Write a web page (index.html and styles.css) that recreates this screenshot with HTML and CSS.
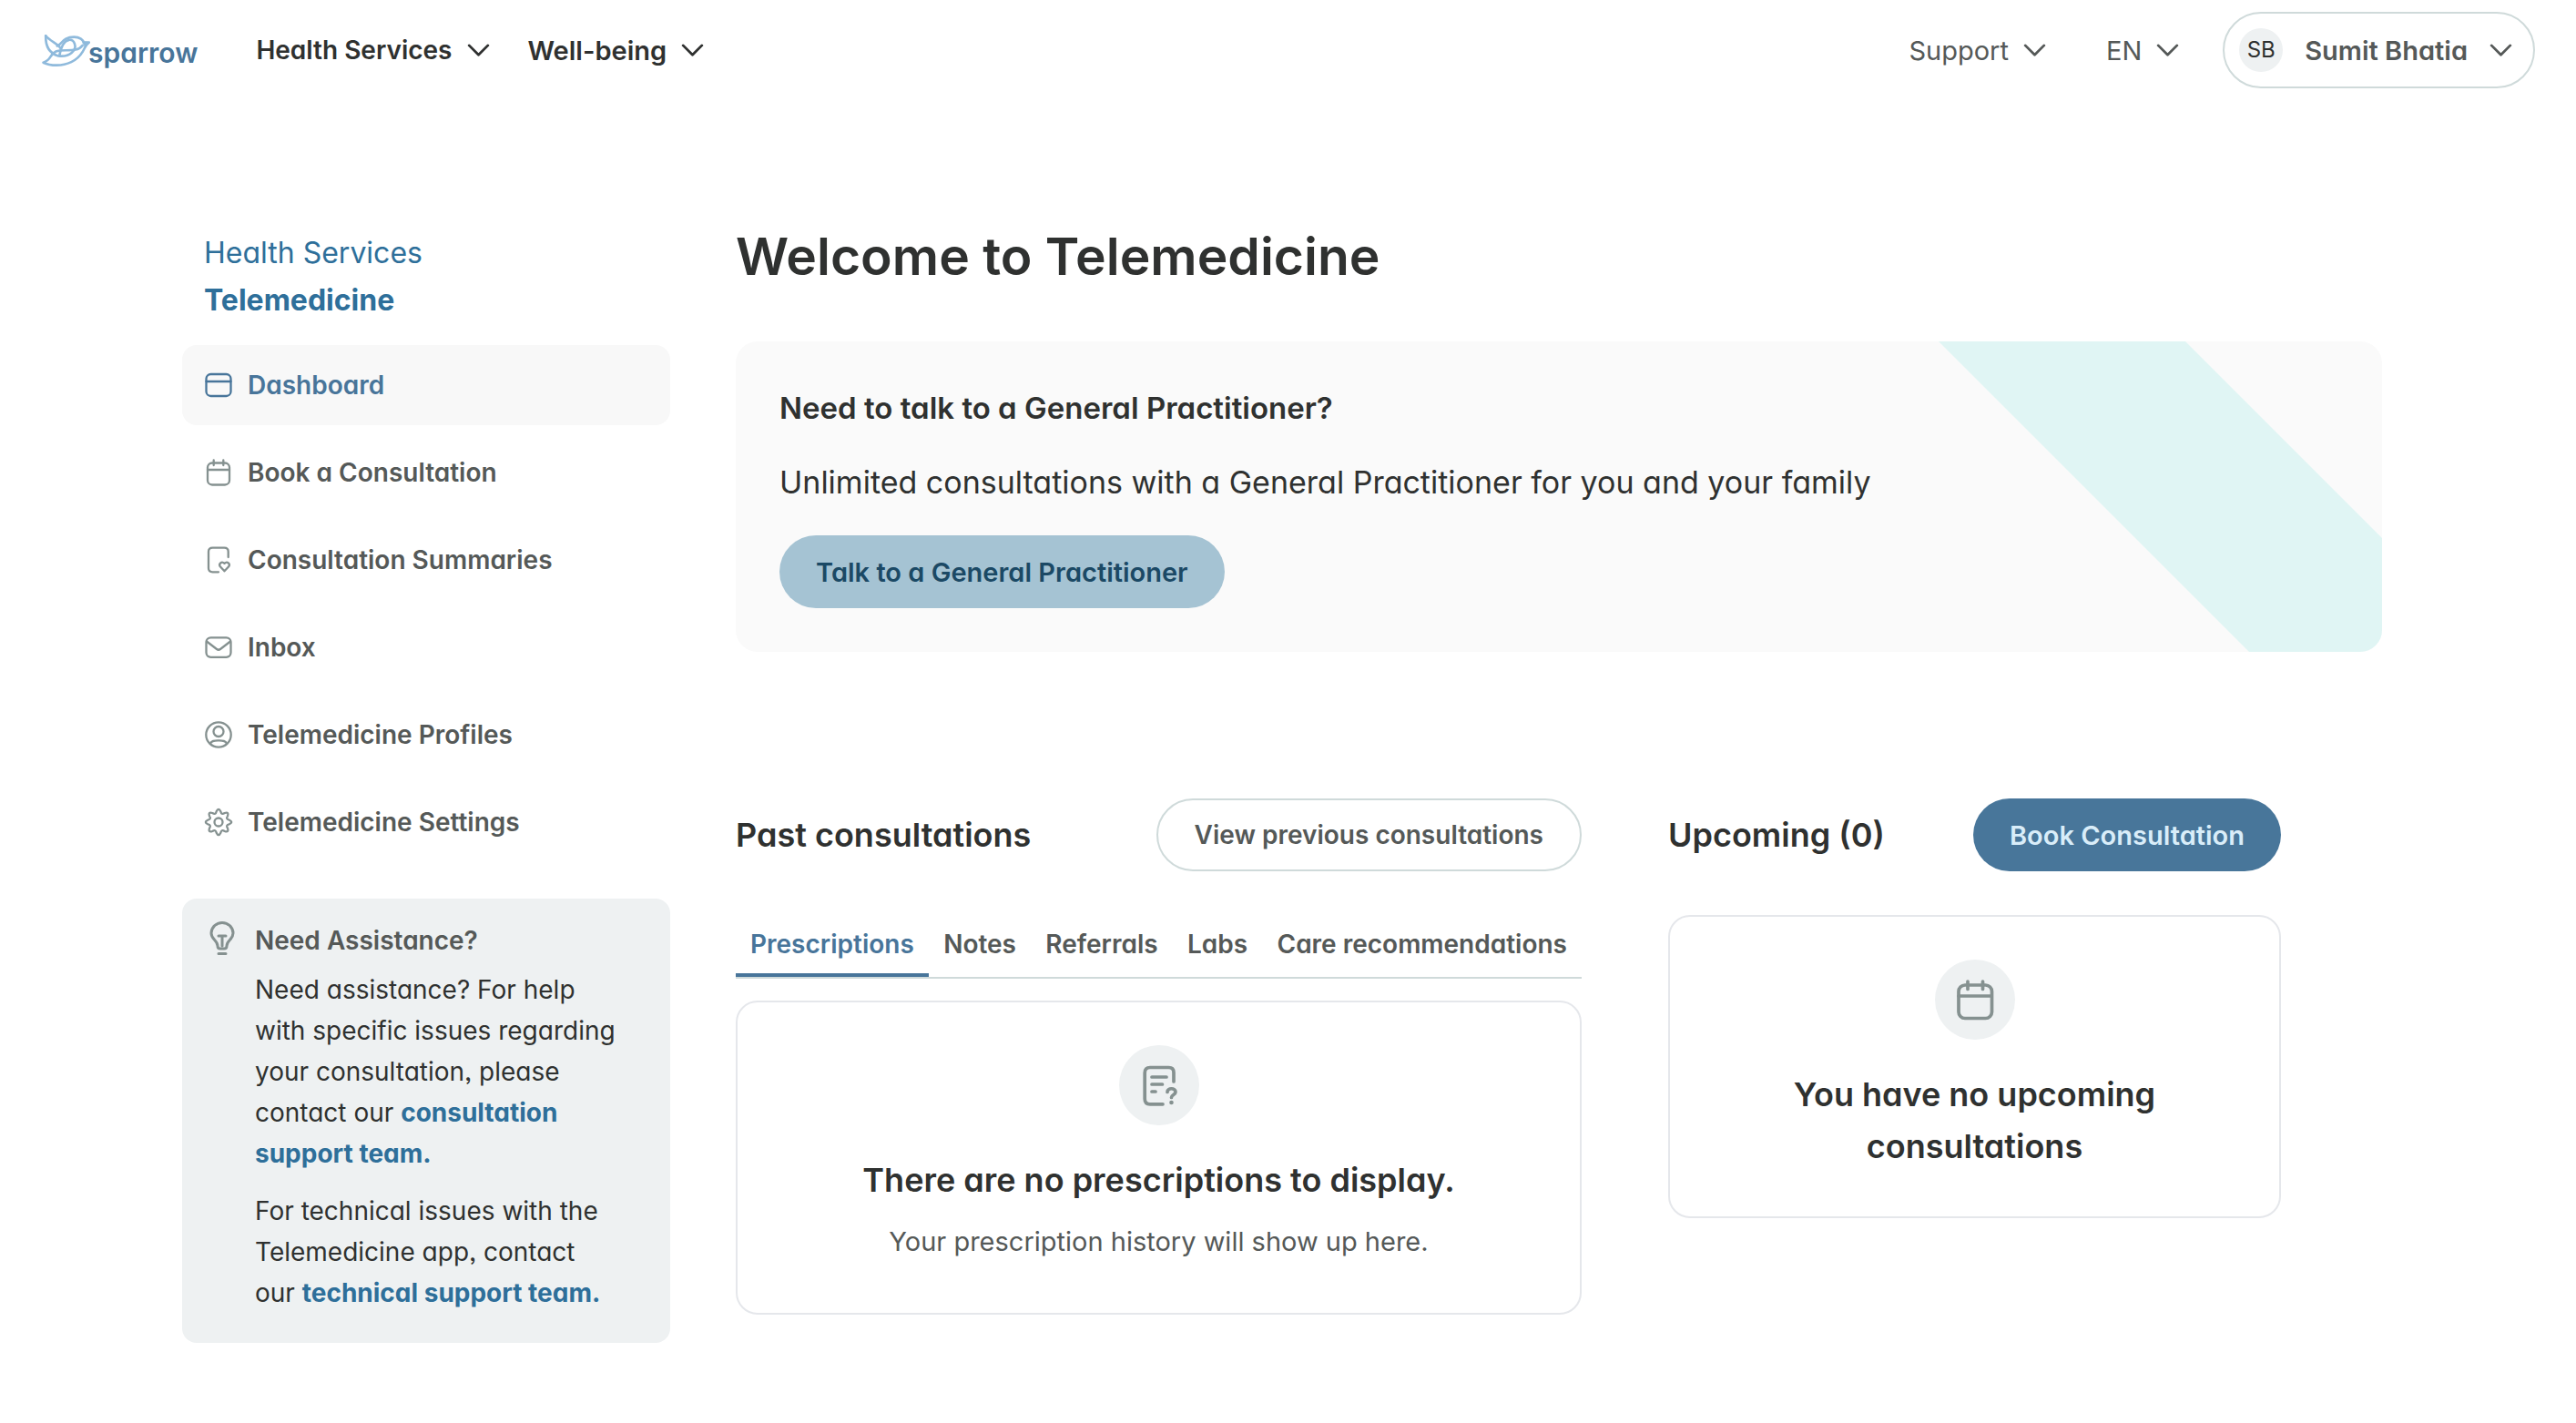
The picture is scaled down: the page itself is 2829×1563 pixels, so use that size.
FILE: index.html
```html
<!DOCTYPE html>
<html lang="en">
<head>
<meta charset="utf-8">
<meta name="viewport" content="width=device-width, initial-scale=1">
<title>Telemedicine - Sparrow</title>
<link rel="stylesheet" href="styles.css">
</head>
<body>
<header class="topbar">
  <a class="logo" href="#">
    <svg class="logo-bird" viewBox="30 40 165 115" fill="none" stroke="#8fbadc" stroke-width="8" stroke-linejoin="round" stroke-linecap="round" aria-hidden="true">
      <path d="M42 50C41 84 52 108 84 117C122 122 146 98 138 76C134 66 126 62 118 64"/>
      <path d="M42 50C56 68 82 76 90 90"/>
      <path d="M80 84C96 80 98 54 136 54C156 54 166 64 168 72L186 72C174 80 172 92 164 104C146 134 112 148 78 148C58 148 44 144 34 139C62 130 54 112 76 102C100 92 146 108 164 82"/>
      <path d="M88 114C92 92 102 68 118 64"/>
      <path d="M166 70L188 72L171 88Z" fill="#8fbadc" stroke-width="2"/>
    </svg>
    <span class="logo-name">sparrow</span>
  </a>
  <nav class="topnav" aria-label="Main">
    <button class="menu menu-strong" type="button">Health Services <svg class="chevron" viewBox="0 0 26 16"><path d="M2 2L13 13L24 2"/></svg></button>
    <button class="menu menu-strong" type="button">Well-being <svg class="chevron" viewBox="0 0 26 16"><path d="M2 2L13 13L24 2"/></svg></button>
  </nav>
  <div class="tools">
    <button class="menu" type="button">Support <svg class="chevron" viewBox="0 0 26 16"><path d="M2 2L13 13L24 2"/></svg></button>
    <button class="menu" type="button">EN <svg class="chevron" viewBox="0 0 26 16"><path d="M2 2L13 13L24 2"/></svg></button>
    <button class="account" type="button"><span class="avatar">SB</span><span class="account-name">Sumit Bhatia</span><svg class="chevron" viewBox="0 0 26 16"><path d="M2 2L13 13L24 2"/></svg></button>
  </div>
</header>

<div class="page">
  <aside class="sidebar">
    <div class="crumbs">
      <a href="#">Health Services</a>
      <a class="crumb-current" href="#">Telemedicine</a>
    </div>
    <nav class="sidenav" aria-label="Telemedicine">
      <a class="side-link side-active" href="#">
        <svg class="icon" viewBox="0 0 32 32"><rect x="2.500" y="4" width="27" height="24" rx="5"/><path d="M2.500 12H29.500"/></svg>Dashboard</a>
      <a class="side-link" href="#">
        <svg class="icon" viewBox="0 0 32 32"><rect x="4" y="5.500" width="24" height="24" rx="5"/><path d="M4 13H28M10.700 2.500V8M21.300 2.500V8"/></svg>Book a Consultation</a>
      <a class="side-link" href="#">
        <svg class="icon" viewBox="0 0 32 32"><path d="M26.700 13V7Q26.700 2.600 22.300 2.600H9.500Q5 2.600 5 7V25Q5 29.300 9.500 29.300H16"/><path d="M22.500 28.300L17.800 23.300C15.800 20.500 19.300 16.800 22.500 19.800C25.700 16.800 29.200 20.500 27.200 23.300Z"/></svg>Consultation Summaries</a>
      <a class="side-link" href="#">
        <svg class="icon" viewBox="0 0 32 32"><rect x="2.500" y="5.300" width="27" height="21.500" rx="5"/><path d="M3 9.500L14 18Q16 19.500 18 18L29 9.500"/></svg>Inbox</a>
      <a class="side-link" href="#">
        <svg class="icon" viewBox="0 0 32 32"><circle cx="16" cy="16" r="13.700"/><circle cx="16" cy="12.500" r="5.500"/><path d="M7 26C8 22 12 22.300 16 22.300C20 22.300 24 22 25 26"/></svg>Telemedicine Profiles</a>
      <a class="side-link" href="#">
        <svg class="icon" viewBox="-16 -16 32 32"><path d="M-2.340-11.770Q0-16.600 2.340-11.770Q3.140-7.580 6.670-9.980Q11.740-11.740 9.980-6.670Q7.580-3.140 11.770-2.340Q16.600 0 11.770 2.340Q7.580 3.140 9.980 6.670Q11.740 11.740 6.670 9.980Q3.140 7.580 2.340 11.770Q0 16.600-2.340 11.770Q-3.140 7.580-6.670 9.980Q-11.740 11.740-9.980 6.670Q-7.580 3.140-11.770 2.340Q-16.600 0-11.770-2.340Q-7.580-3.140-9.980-6.670Q-11.740-11.740-6.670-9.980Q-3.140-7.580-2.340-11.770Z"/><circle r="4.500"/></svg>Telemedicine Settings</a>
    </nav>
    <section class="assist">
      <svg class="bulb" viewBox="0 0 32 40"><path d="M11 28C11 22 4 21 4 14A12 11.500 0 0 1 28 14C28 21 21 22 21 28Q21 31 18 31H14Q11 31 11 28Z"/><path d="M12 17H20M16 17V28M12 36.500H20"/></svg>
      <div class="assist-body">
        <h2>Need Assistance?</h2>
        <p>Need assistance? For help with specific issues regarding your consultation, please contact our <a href="#">consultation support team.</a></p>
        <p>For technical issues with the Telemedicine app, contact our <a href="#">technical support team.</a></p>
      </div>
    </section>
  </aside>

  <main class="main">
    <h1>Welcome to Telemedicine</h1>
    <section class="banner">
      <svg class="banner-stripe" viewBox="0 0 487 341" aria-hidden="true"><path d="M0 0H271L487 216V341H341Z" fill="#e0f5f4"/></svg>
      <h2>Need to talk to a General Practitioner?</h2>
      <p>Unlimited consultations with a General Practitioner for you and your family</p>
      <button class="btn btn-soft" type="button">Talk to a General Practitioner</button>
    </section>

    <div class="columns">
      <section>
        <div class="section-head">
          <h2>Past consultations</h2>
          <button class="btn btn-outline" type="button">View previous consultations</button>
        </div>
        <div class="tabs" role="tablist">
          <button class="tab tab-active" role="tab" aria-selected="true" type="button">Prescriptions</button>
          <button class="tab" role="tab" aria-selected="false" type="button">Notes</button>
          <button class="tab" role="tab" aria-selected="false" type="button">Referrals</button>
          <button class="tab" role="tab" aria-selected="false" type="button">Labs</button>
          <button class="tab" role="tab" aria-selected="false" type="button">Care recommendations</button>
        </div>
        <div class="card" role="tabpanel">
          <span class="badge"><svg class="icon-lg" viewBox="0 0 48 48"><path d="M40 20V10Q40 4.500 34.500 4.500H14Q8.200 4.500 8.200 10.500V39Q8.200 44.800 14 44.800H28"/><path d="M16 15H32M16 23H27.500M16 31H20"/><path d="M33 31.500C33 26.500 42 26.500 42 31.500C42 34.500 37.500 34.500 37.500 37.500"/><circle class="dot" cx="37.500" cy="43" r="2.300"/></svg></span>
          <h3>There are no prescriptions to display.</h3>
          <p>Your prescription history will show up here.</p>
        </div>
      </section>
      <section>
        <div class="section-head">
          <h2>Upcoming (0)</h2>
          <button class="btn btn-primary" type="button">Book Consultation</button>
        </div>
        <div class="card card-upcoming">
          <span class="badge"><svg class="icon-lg" viewBox="0 0 48 48"><rect x="6" y="8" width="36.500" height="36.500" rx="7"/><path d="M6 20H42M16 4V12.500M32.500 4V12.500"/></svg></span>
          <h3>You have no upcoming consultations</h3>
        </div>
      </section>
    </div>
  </main>
</div>
</body>
</html>
```

FILE: styles.css
```css
:root {
  --ink: #2f3130;
  --grey: #555958;
  --icon: #859190;
  --link: #2e6f9a;
  --blue: #48759a;
  --mist: #eef1f2;
  --line: #cfdada;
  --card-line: #e5e7eb;
}

* { box-sizing: border-box; }

body {
  margin: 0;
  background: #fff;
  color: var(--ink);
  font-family: Inter, "Liberation Sans", sans-serif;
  font-feature-settings: "cv11", "ss03";
  font-size: 28px;
  line-height: 45px;
}

h1, h2, h3, p { margin: 0; font-weight: 600; }
p { font-weight: 400; }
a { color: inherit; text-decoration: none; }
button {
  margin: 0;
  padding: 0;
  border: 0;
  background: none;
  color: inherit;
  font: inherit;
  font-feature-settings: inherit;
  white-space: nowrap;
  cursor: pointer;
}
svg { flex: none; display: block; }

/* Top bar */
.topbar {
  display: flex;
  align-items: center;
  padding: 13px 45px 0 46px;
}
.logo { display: flex; align-items: center; }
.logo-bird { width: 55px; height: 38px; }
.logo-name {
  margin-left: -4px;
  padding-top: 6px;
  color: var(--blue);
  font-size: 30px;
  font-weight: 600;
}
.topnav { display: flex; gap: 42px; margin-left: 64px; }
.topnav .menu + .menu { font-size: 29px; }
.tools {
  display: flex;
  align-items: center;
  gap: 66px;
  margin-left: auto;
  font-size: 29px;
}
.menu { display: flex; align-items: center; gap: 16px; color: var(--grey); }
.menu-strong { color: var(--ink); font-weight: 600; }
.chevron { width: 25px; height: 15px; }
.chevron path { fill: none; stroke: currentColor; stroke-width: 3; stroke-linecap: round; stroke-linejoin: round; }
.account {
  display: flex;
  align-items: center;
  height: 84px;
  margin-left: -18px;
  padding: 0 23px 0 16px;
  border: 2px solid var(--line);
  border-radius: 42px;
  color: var(--grey);
  font-weight: 600;
}
.avatar {
  width: 48px;
  border-radius: 50%;
  background: var(--mist);
  color: var(--ink);
  font-size: 24px;
  font-weight: 400;
  line-height: 48px;
  text-align: center;
}
.account-name { margin: 0 24px; }

/* Page frame */
.page {
  display: flex;
  gap: 72px;
  padding: 155px 213px 60px 200px;
}
.sidebar { flex: none; width: 536px; }
.main { flex: 1; min-width: 0; }

/* Sidebar */
.crumbs {
  display: flex;
  flex-direction: column;
  padding: 0 24px;
  color: var(--link);
  font-size: 32px;
  line-height: 52px;
}
.crumb-current { font-weight: 700; }
.sidenav {
  display: flex;
  flex-direction: column;
  gap: 8px;
  margin-top: 23px;
}
.side-link {
  display: flex;
  align-items: center;
  gap: 16px;
  height: 88px;
  padding: 0 24px;
  border-radius: 16px;
  color: var(--grey);
  font-weight: 600;
}
.side-active { background: #f8f8f8; color: var(--blue); }
.icon, .icon-lg, .bulb {
  fill: none;
  stroke: var(--icon);
  stroke-linecap: round;
  stroke-linejoin: round;
}
.icon { width: 32px; height: 32px; stroke-width: 2.300; }
.side-active .icon { stroke: var(--blue); }
.icon-lg { width: 48px; height: 48px; stroke-width: 3.700; }
.icon-lg .dot { fill: var(--icon); stroke: none; }
.bulb { width: 32px; height: 40px; stroke-width: 3; }
.assist {
  display: flex;
  align-items: flex-start;
  gap: 20px;
  margin-top: 40px;
  padding: 24px 56px 32px 28px;
  border-radius: 16px;
  background: var(--mist);
}
.assist h2 {
  margin-bottom: 9px;
  color: var(--grey);
  font-size: 28px;
}
.assist p + p { margin-top: 18px; }
.assist a { color: var(--link); font-weight: 700; }

/* Main column */
h1 {
  font-size: 57px;
  line-height: 76px;
  margin-top: -8px;
}
.banner {
  position: relative;
  margin-top: 55px;
  padding: 48px;
  border-radius: 24px;
  background: #fafafa;
  overflow: hidden;
}
.banner-stripe { position: absolute; top: 0; right: 0; height: 100%; }
.banner h2, .banner p {
  position: relative;
  margin-bottom: 32px;
  font-size: 33px;
  line-height: 50px;
}
.banner p { margin-bottom: 33px; font-size: 34px; }

.btn {
  display: block;
  position: relative;
  height: 80px;
  padding: 0 40px;
  border-radius: 40px;
  font-size: 29px;
  font-weight: 600;
}
.btn-soft { background: #a5c3d3; color: #1b4965; }
.btn-outline { border: 2px solid var(--line); color: var(--grey); font-size: 28px; }
.btn-primary { background: #48769a; color: #d9edf9; }

.columns {
  display: grid;
  grid-template-columns: 929fr 673fr;
  align-items: start;
  gap: 95px;
  margin-top: 161px;
  padding-right: 111px;
}
.section-head {
  display: flex;
  align-items: center;
  justify-content: space-between;
}
.section-head h2, .card h3 {
  font-size: 36px;
  line-height: 57px;
}

.tabs {
  display: flex;
  justify-content: space-between;
  margin-top: 46px;
  border-bottom: 2px solid var(--line);
}
.tab {
  padding: 12px 16px 9px;
  border-bottom: 4px solid transparent;
  color: var(--grey);
  font-weight: 600;
}
.tab-active { border-color: var(--blue); color: var(--blue); }

.card {
  display: flex;
  flex-direction: column;
  align-items: center;
  margin-top: 24px;
  padding: 47px 96px 56px;
  border: 2px solid var(--card-line);
  border-radius: 24px;
  text-align: center;
}
.card-upcoming { margin-top: 48px; padding-bottom: 48px; }
.card h3 { margin-top: 32px; }
.card p { margin-top: 16px; color: var(--grey); font-size: 29px; }
.badge {
  display: grid;
  place-items: center;
  width: 88px;
  height: 88px;
  border-radius: 50%;
  background: var(--mist);
}
```
